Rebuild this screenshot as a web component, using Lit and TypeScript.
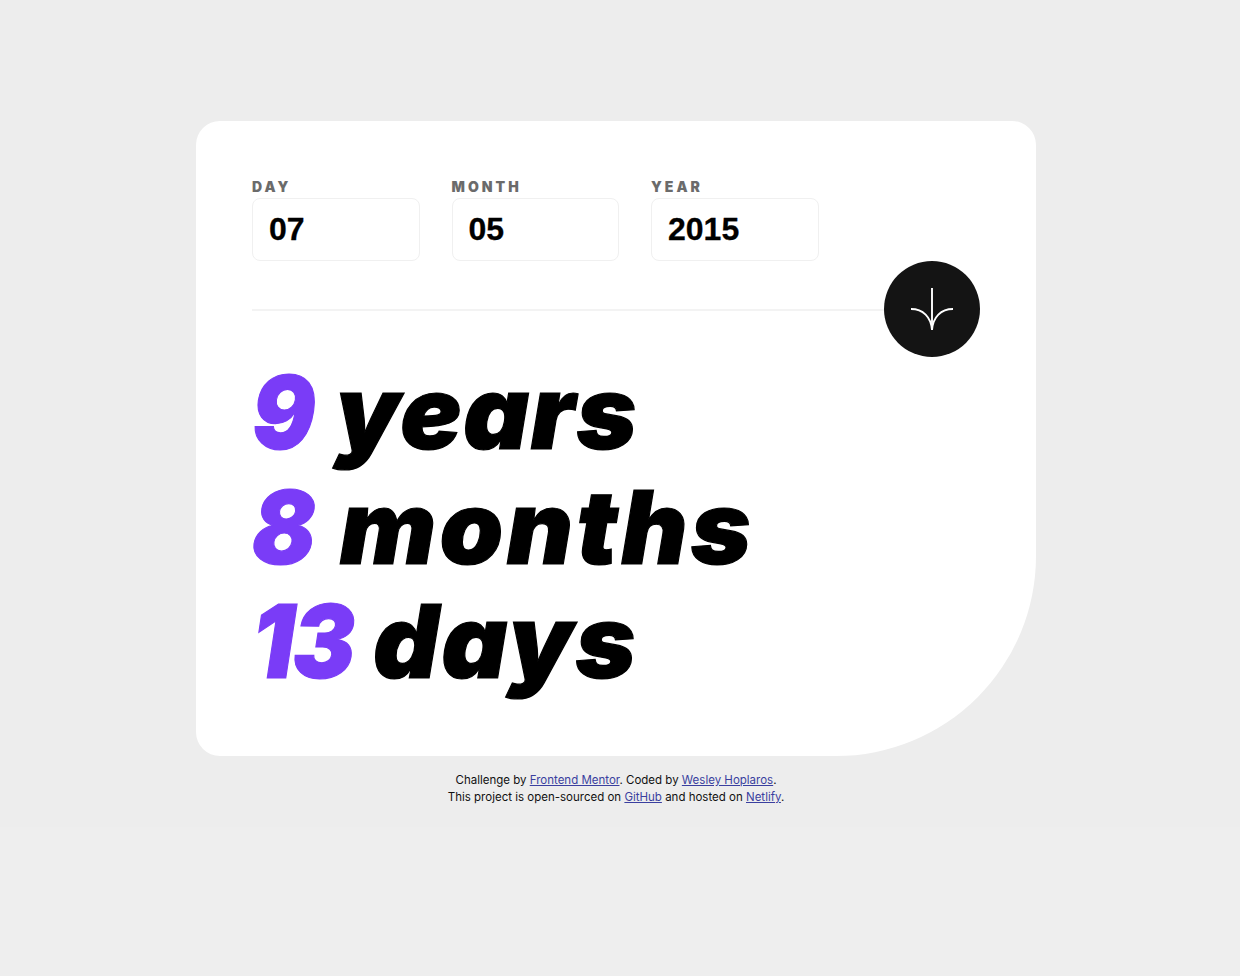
import { LitElement, html, css } from "lit";
import { customElement } from "lit/decorators.js";

@customElement("app-root")
export class AppRoot extends LitElement {
  static styles = css`
    :host { display: block; min-height: 976px; background: #eeeeee; font-family: "Inter", "Noto Sans", sans-serif; }
    .page { background: #ededed; height: 827px; box-sizing: border-box; padding: 121px 8px 0 0; display: flex; flex-direction: column; align-items: center; }
    .card { width: 840px; height: 635px; box-sizing: border-box; background: #fff; border-radius: 24px 24px 200px 24px; padding: 56px 56px 0; }
    .fields { display: flex; gap: 32px; }
    .field { display: flex; flex-direction: column; width: 167.5px; }
    .label { font-family: "Inter", sans-serif; font-weight: 900; font-size: 14px; letter-spacing: 3px; line-height: 19px; padding-bottom: 2px; color: #6b6b6b; }
    .box { box-sizing: border-box; height: 63px; border: 1.5px solid #f0f0f0; border-radius: 8px; padding-left: 16px; display: flex; align-items: center; font-family: "Liberation Sans", Arial, sans-serif; font-weight: 700; font-size: 32px; color: #000; -webkit-text-stroke: 0.3px #000; }
    .divider { height: 96px; display: flex; align-items: center; }
    .line { flex: 1; height: 2px; margin-top: 1px; background: #f3f3f3; }
    .btn { width: 96px; height: 96px; border-radius: 50%; background: #141414; display: flex; align-items: center; justify-content: center; flex: none; }
    .btn svg { display: block; }
    .result { margin-top: -2px; font-weight: 900; font-style: italic; font-size: 102px; line-height: 114.5px; color: #000; -webkit-text-stroke: 1.2px #000; }
    .row { display: flex; align-items: baseline; white-space: nowrap; }
    .n { color: #7a3cf7; -webkit-text-stroke: 1.2px #7a3cf7; letter-spacing: -2px; transform: scaleX(0.92); transform-origin: left; }
    .w1 { letter-spacing: 1.7px; margin-left: 16.5px; }
    .w2 { letter-spacing: 3.5px; margin-left: 20.5px; }
    .w3 { letter-spacing: 2.8px; margin-left: 10.5px; }
    .foot { margin-top: 16px; text-align: center; font-family: "Inter", sans-serif; font-size: 11.5px; line-height: 17px; color: #111; }
    .foot a { color: #3a3f9f; text-decoration: underline; }
  `;
  render() {
    const fields = [["DAY", "07"], ["MONTH", "05"], ["YEAR", "2015"]];
    return html`<div class="page">
      <main class="card">
        <div class="fields">
          ${fields.map(([l, v]) => html`<div class="field"><span class="label">${l}</span><div class="box">${v}</div></div>`)}
        </div>
        <div class="divider">
          <div class="line"></div>
          <div class="btn">
            <svg width="42" height="42" viewBox="0 0 42 42" fill="none" stroke="#fff" stroke-width="1.9">
              <path d="M21 0v42" />
              <path d="M0 21c12 0 20 8 21 21M42 21c-12 0-20 8-21 21" />
            </svg>
          </div>
        </div>
        <div class="result">
          <div class="row"><span class="n">9</span><span class="w1">years</span></div>
          <div class="row"><span class="n">8</span><span class="w2">months</span></div>
          <div class="row"><span class="n">13</span><span class="w3">days</span></div>
        </div>
      </main>
      <footer class="foot">
        Challenge by <a href="#">Frontend Mentor</a>. Coded by <a href="#">Wesley Hoplaros</a>.<br />
        This project is open-sourced on <a href="#">GitHub</a> and hosted on <a href="#">Netlify</a>.
      </footer>
    </div>`;
  }
}
